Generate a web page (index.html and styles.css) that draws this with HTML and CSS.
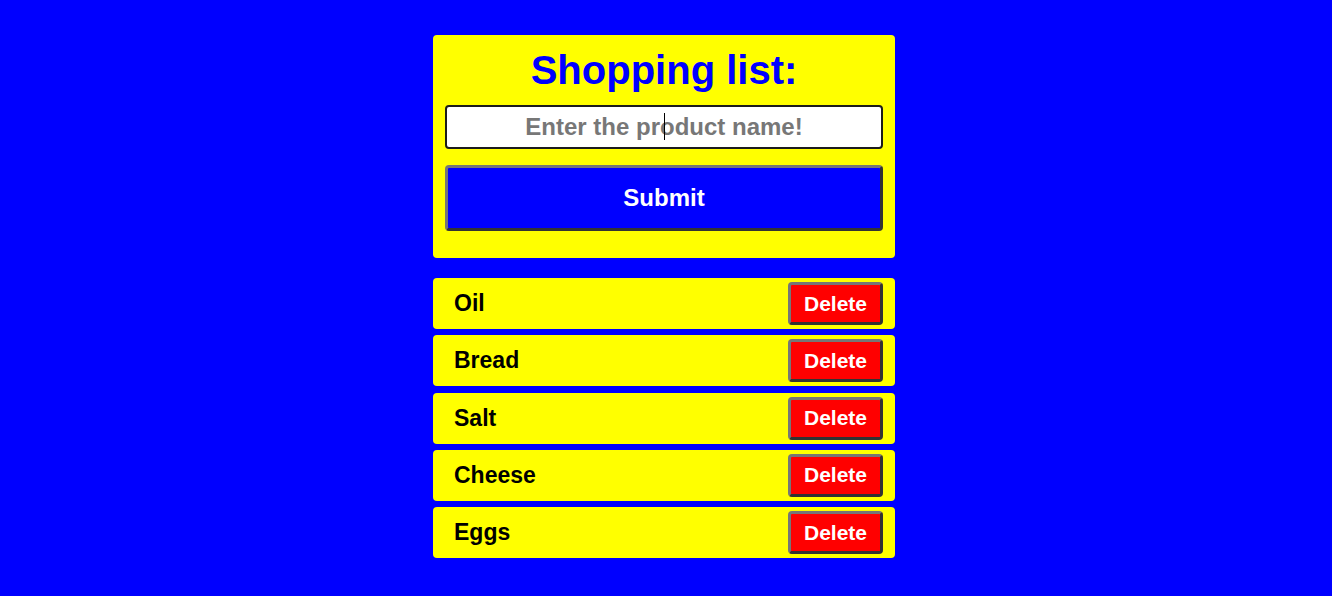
FILE: index.html
```html
<!DOCTYPE html>
<html lang="en">
<head>
<meta charset="utf-8">
<title>Shopping list</title>
<link rel="stylesheet" href="styles.css">
</head>
<body>
<main class="app">
  <form class="card">
    <h1 class="title">Shopping list:</h1>
    <div class="field">
      <input class="product-input" type="text" placeholder="Enter the product name!">
      <span class="caret"></span>
    </div>
    <button class="submit" type="button">Submit</button>
  </form>
  <ul class="list">
    <li class="item"><span class="item-name">Oil</span><button class="delete" type="button">Delete</button></li>
    <li class="item"><span class="item-name">Bread</span><button class="delete" type="button">Delete</button></li>
    <li class="item"><span class="item-name">Salt</span><button class="delete" type="button">Delete</button></li>
    <li class="item"><span class="item-name">Cheese</span><button class="delete" type="button">Delete</button></li>
    <li class="item"><span class="item-name">Eggs</span><button class="delete" type="button">Delete</button></li>
  </ul>
</main>
</body>
</html>
```

FILE: styles.css
```css
* { box-sizing: border-box; }

html, body {
  margin: 0;
  height: 100%;
}

body {
  background: #0000ff;
  font-family: "Liberation Sans", Arial, sans-serif;
  padding-right: 4px;
}

.app {
  width: 462px;
  margin: 35px auto 0;
  display: flex;
  flex-direction: column;
}

.card {
  background: #ffff00;
  border-radius: 4px;
  padding: 12px 12px 27px;
  display: flex;
  flex-direction: column;
  margin: 0;
}

.title {
  margin: 0;
  font-size: 40px;
  line-height: 46px;
  font-weight: bold;
  color: #0000ff;
  text-align: center;
}

.field {
  position: relative;
  margin-top: 12px;
}

.product-input {
  display: block;
  width: 100%;
  height: 44px;
  border: 2px solid #1c1c1c;
  border-radius: 4px;
  background: #ffffff;
  font-family: "Liberation Sans", Arial, sans-serif;
  font-size: 24px;
  font-weight: bold;
  text-align: center;
  color: #000;
  padding: 0 8px;
  outline: none;
}

.product-input::placeholder {
  color: #777777;
  opacity: 1;
}

.caret {
  position: absolute;
  left: 219px;
  top: 8px;
  width: 1px;
  height: 27px;
  background: #000;
}

.submit {
  margin-top: 16px;
  height: 66px;
  width: 100%;
  background: #0000ff;
  color: #ffffff;
  font-family: "Liberation Sans", Arial, sans-serif;
  font-size: 24px;
  font-weight: bold;
  border: 3px solid;
  border-color: #767676 #333333 #333333 #767676;
  border-radius: 4px;
  padding: 0;
}

.list {
  list-style: none;
  margin: 20px 0 0;
  padding: 0;
  display: flex;
  flex-direction: column;
  gap: 6.25px;
}

.item {
  background: #ffff00;
  border-radius: 4px;
  height: 51px;
  padding: 0 12px 0 21px;
  display: flex;
  align-items: center;
  justify-content: space-between;
}

.item-name {
  font-size: 23px;
  font-weight: bold;
  color: #000;
}

.delete {
  height: 43px;
  background: #ff0000;
  color: #ffffff;
  font-family: "Liberation Sans", Arial, sans-serif;
  font-size: 21px;
  font-weight: bold;
  border: 3px solid;
  border-color: #767676 #333333 #333333 #767676;
  border-radius: 4px;
  padding: 0 13px;
}
```
